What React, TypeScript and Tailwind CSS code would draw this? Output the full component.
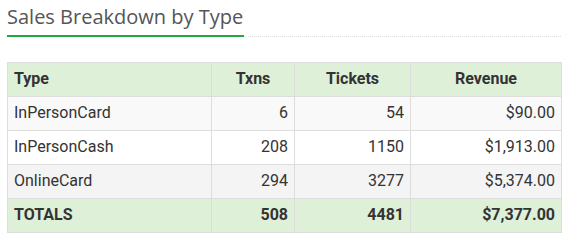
import React from 'react';

interface Row {
  type: string;
  txns: number;
  tickets: number;
  revenue: string;
  bg: string;
}

const rows: Row[] = [
  { type: 'InPersonCard', txns: 6, tickets: 54, revenue: '$90.00', bg: 'bg-[#f9f9f9]' },
  { type: 'InPersonCash', txns: 208, tickets: 1150, revenue: '$1,913.00', bg: 'bg-white' },
  { type: 'OnlineCard', txns: 294, tickets: 3277, revenue: '$5,374.00', bg: 'bg-[#f4f4f4]' },
];

const cell = 'border border-[#ddd] px-[6px] pt-0 pb-[2px]';

const App: React.FC = () => {
  return (
    <div className="w-[573px] h-[244px] bg-white pl-[7px] pr-[12px]">
      {/* Section heading */}
      <div className="flex items-end border-b border-dotted border-[#ddd] h-[37px] mb-[25px]">
        <h2 className="font-['Open_Sans',sans-serif] text-[20px] leading-none text-[#555] border-b-2 border-[#22a744] pb-[8px] -mb-px pr-[1px] pt-[8px]">
          Sales Breakdown by Type
        </h2>
      </div>

      <table className="w-[554px] border-collapse font-['Roboto',sans-serif] text-[16px] text-[#333] table-fixed">
        <colgroup>
          <col className="w-[204px]" />
          <col className="w-[83px]" />
          <col className="w-[116px]" />
          <col className="w-[151px]" />
        </colgroup>
        <thead>
          <tr className="bg-[#dff0d8] h-[34px]">
            <th className={`${cell} text-left font-bold`}>Type</th>
            <th className={`${cell} text-center font-bold`}>Txns</th>
            <th className={`${cell} text-center font-bold`}>Tickets</th>
            <th className={`${cell} text-center font-bold`}>Revenue</th>
          </tr>
        </thead>
        <tbody>
          {rows.map((r) => (
            <tr key={r.type} className={`h-[34px] ${r.bg}`}>
              <td className={`${cell} text-left`}>{r.type}</td>
              <td className={`${cell} text-right`}>{r.txns}</td>
              <td className={`${cell} text-right`}>{r.tickets}</td>
              <td className={`${cell} text-right`}>{r.revenue}</td>
            </tr>
          ))}
          <tr className="bg-[#dff0d8] h-[34px] font-bold">
            <td className={`${cell} text-left`}>TOTALS</td>
            <td className={`${cell} text-right`}>508</td>
            <td className={`${cell} text-right`}>4481</td>
            <td className={`${cell} text-right`}>$7,377.00</td>
          </tr>
        </tbody>
      </table>
    </div>
  );
};

export default App;
